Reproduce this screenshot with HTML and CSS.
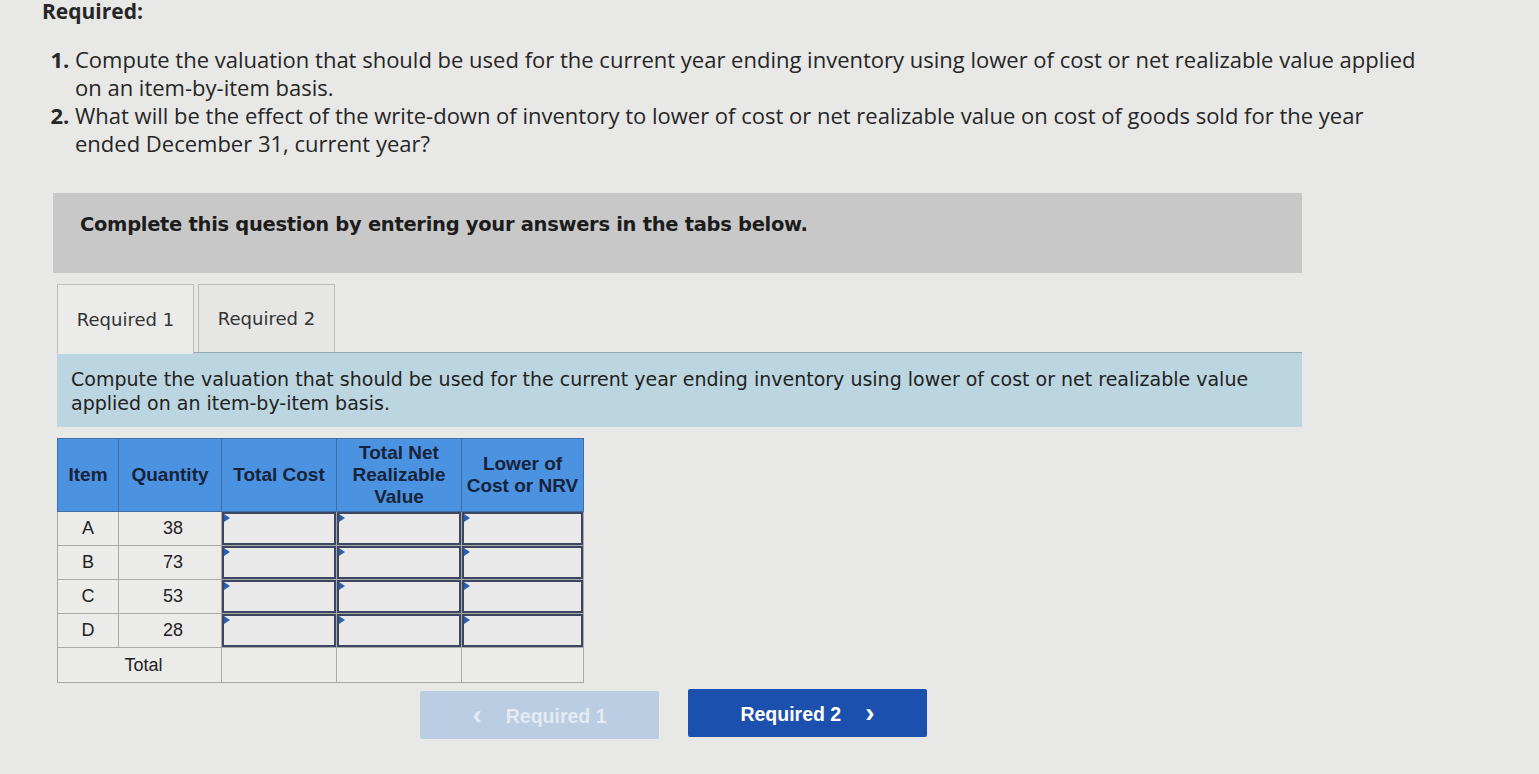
FILE: index.html
```html
<!DOCTYPE html>
<html lang="en">
<head>
    <meta charset="UTF-8">
    <title>Required</title>
    <link rel="stylesheet" href="styles.css">
</head>
<body>
    <div class="page">
        <div class="req-title">Required:</div>
        <ol class="req-list">
            <li>Compute the valuation that should be used for the current year ending inventory using lower of cost or net realizable value applied on an item-by-item basis.</li>
            <li>What will be the effect of the write-down of inventory to lower of cost or net realizable value on cost of goods sold for the year ended December 31, current year?</li>
        </ol>

        <div class="notice">Complete this question by entering your answers in the tabs below.</div>

        <div class="tabs">
            <div class="tab active">Required 1</div>
            <div class="tab">Required 2</div>
        </div>
        <div class="tab-panel">
            Compute the valuation that should be used for the current year ending inventory using lower of cost or net realizable value applied on an item-by-item basis.
        </div>

        <table class="lcnrv">
            <colgroup>
                <col style="width:61px">
                <col style="width:103px">
                <col style="width:115px">
                <col style="width:125px">
                <col style="width:122px">
            </colgroup>
            <thead>
                <tr>
                    <th>Item</th>
                    <th>Quantity</th>
                    <th>Total Cost</th>
                    <th>Total Net Realizable Value</th>
                    <th>Lower of Cost or NRV</th>
                </tr>
            </thead>
            <tbody>
                <tr><td class="item">A</td><td class="qty">38</td><td class="entry"><div class="box"></div></td><td class="entry"><div class="box"></div></td><td class="entry"><div class="box"></div></td></tr>
                <tr><td class="item">B</td><td class="qty">73</td><td class="entry"><div class="box"></div></td><td class="entry"><div class="box"></div></td><td class="entry"><div class="box"></div></td></tr>
                <tr><td class="item">C</td><td class="qty">53</td><td class="entry"><div class="box"></div></td><td class="entry"><div class="box"></div></td><td class="entry"><div class="box"></div></td></tr>
                <tr><td class="item">D</td><td class="qty">28</td><td class="entry"><div class="box"></div></td><td class="entry"><div class="box"></div></td><td class="entry"><div class="box"></div></td></tr>
                <tr class="total"><td colspan="2">Total</td><td></td><td></td><td></td></tr>
            </tbody>
        </table>

        <div class="nav">
            <button class="nav-btn prev" disabled><span class="chev">&#8249;</span>Required 1</button>
            <button class="nav-btn next">Required 2<span class="chev">&#8250;</span></button>
        </div>
    </div>
</body>
</html>
```

FILE: styles.css
```css
body { margin: 0; background: #e8e8e7; color: #262626; font-family: "Open Sans", Lato, sans-serif; }
.page { padding-left: 42px; }

.req-title { font-weight: bold; font-size: 21px; line-height: 22px; }
.req-list { margin: 23px 0 0 8px; padding-left: 25px; font-size: 22px; line-height: 28px; width: 1350px; }
.req-list li::marker { font-weight: bold; }

.notice { margin: 36px 0 0 11px; width: 1249px; height: 80px; box-sizing: border-box; background: #c8c8c8; padding: 20px 0 0 27px;
    font-family: "DejaVu Sans", Verdana, sans-serif; font-weight: bold; font-size: 19.5px; line-height: 24px; letter-spacing: -0.3px; color: #1c1c1c; }

.tabs { display: flex; gap: 4px; margin: 11px 0 0 15px; }
.tab { width: 137px; height: 68px; box-sizing: border-box; border: 1px solid #bdbdbd; border-bottom: none; background: #e6e6e5;
    font-family: "DejaVu Sans", Verdana, sans-serif; font-size: 18px; color: #333; display: flex; align-items: center; justify-content: center; }
.tab.active { background: #ebebea; height: 70px; margin-bottom: -2px; position: relative; z-index: 1; }

.tab-panel { margin-left: 15px; width: 1245px; box-sizing: border-box; background: #bcd6e1; border-top: 1px solid #8fa9b5;
    padding: 14px 14px 12px; font-family: "DejaVu Sans", Verdana, sans-serif; font-size: 19px; line-height: 24px; color: #222; }

.lcnrv { margin: 11px 0 0 15px; border-collapse: collapse; table-layout: fixed; width: 526px; font-family: "Liberation Sans", Arial, sans-serif; font-size: 18px; color: #222; }
.lcnrv th { background: #4b92e0; color: #16233a; font-size: 19px; font-weight: bold; height: 72px; padding: 0 2px; border: 1px solid #3d6fa8; line-height: 22px; }
.lcnrv td { height: 33px; padding: 0; border: 1px solid #a9a9a9; background: #ebebea; }
.item { text-align: center; }
.qty { text-align: right; padding-right: 38px !important; }
.entry { position: relative; }
.box { height: 29px; border: 2px solid #3c4660; background: #e9e9ea; }
.entry::before { content: ""; position: absolute; left: 2px; top: 2px; border-left: 6px solid #2b5fb0; border-top: 4px solid transparent; border-bottom: 4px solid transparent; }
.total td { height: 34px; }
.total td:first-child { text-align: center; padding-left: 8px; }

.nav { display: flex; gap: 29px; margin: 8px 0 0 378px; }
.nav-btn { width: 239px; height: 48px; border: none; border-radius: 2px; font-family: "Liberation Sans", Arial, sans-serif; font-weight: bold; font-size: 19.5px; }
.nav-btn.prev { background: #bacde2; color: #e3ebf4; }
.nav-btn.next { background: #1c50ae; color: #fff; margin-top: -2px; }
.chev { font-size: 28px; vertical-align: -1px; }
.prev .chev { margin-right: 24px; }
.next .chev { margin-left: 24px; }
```
